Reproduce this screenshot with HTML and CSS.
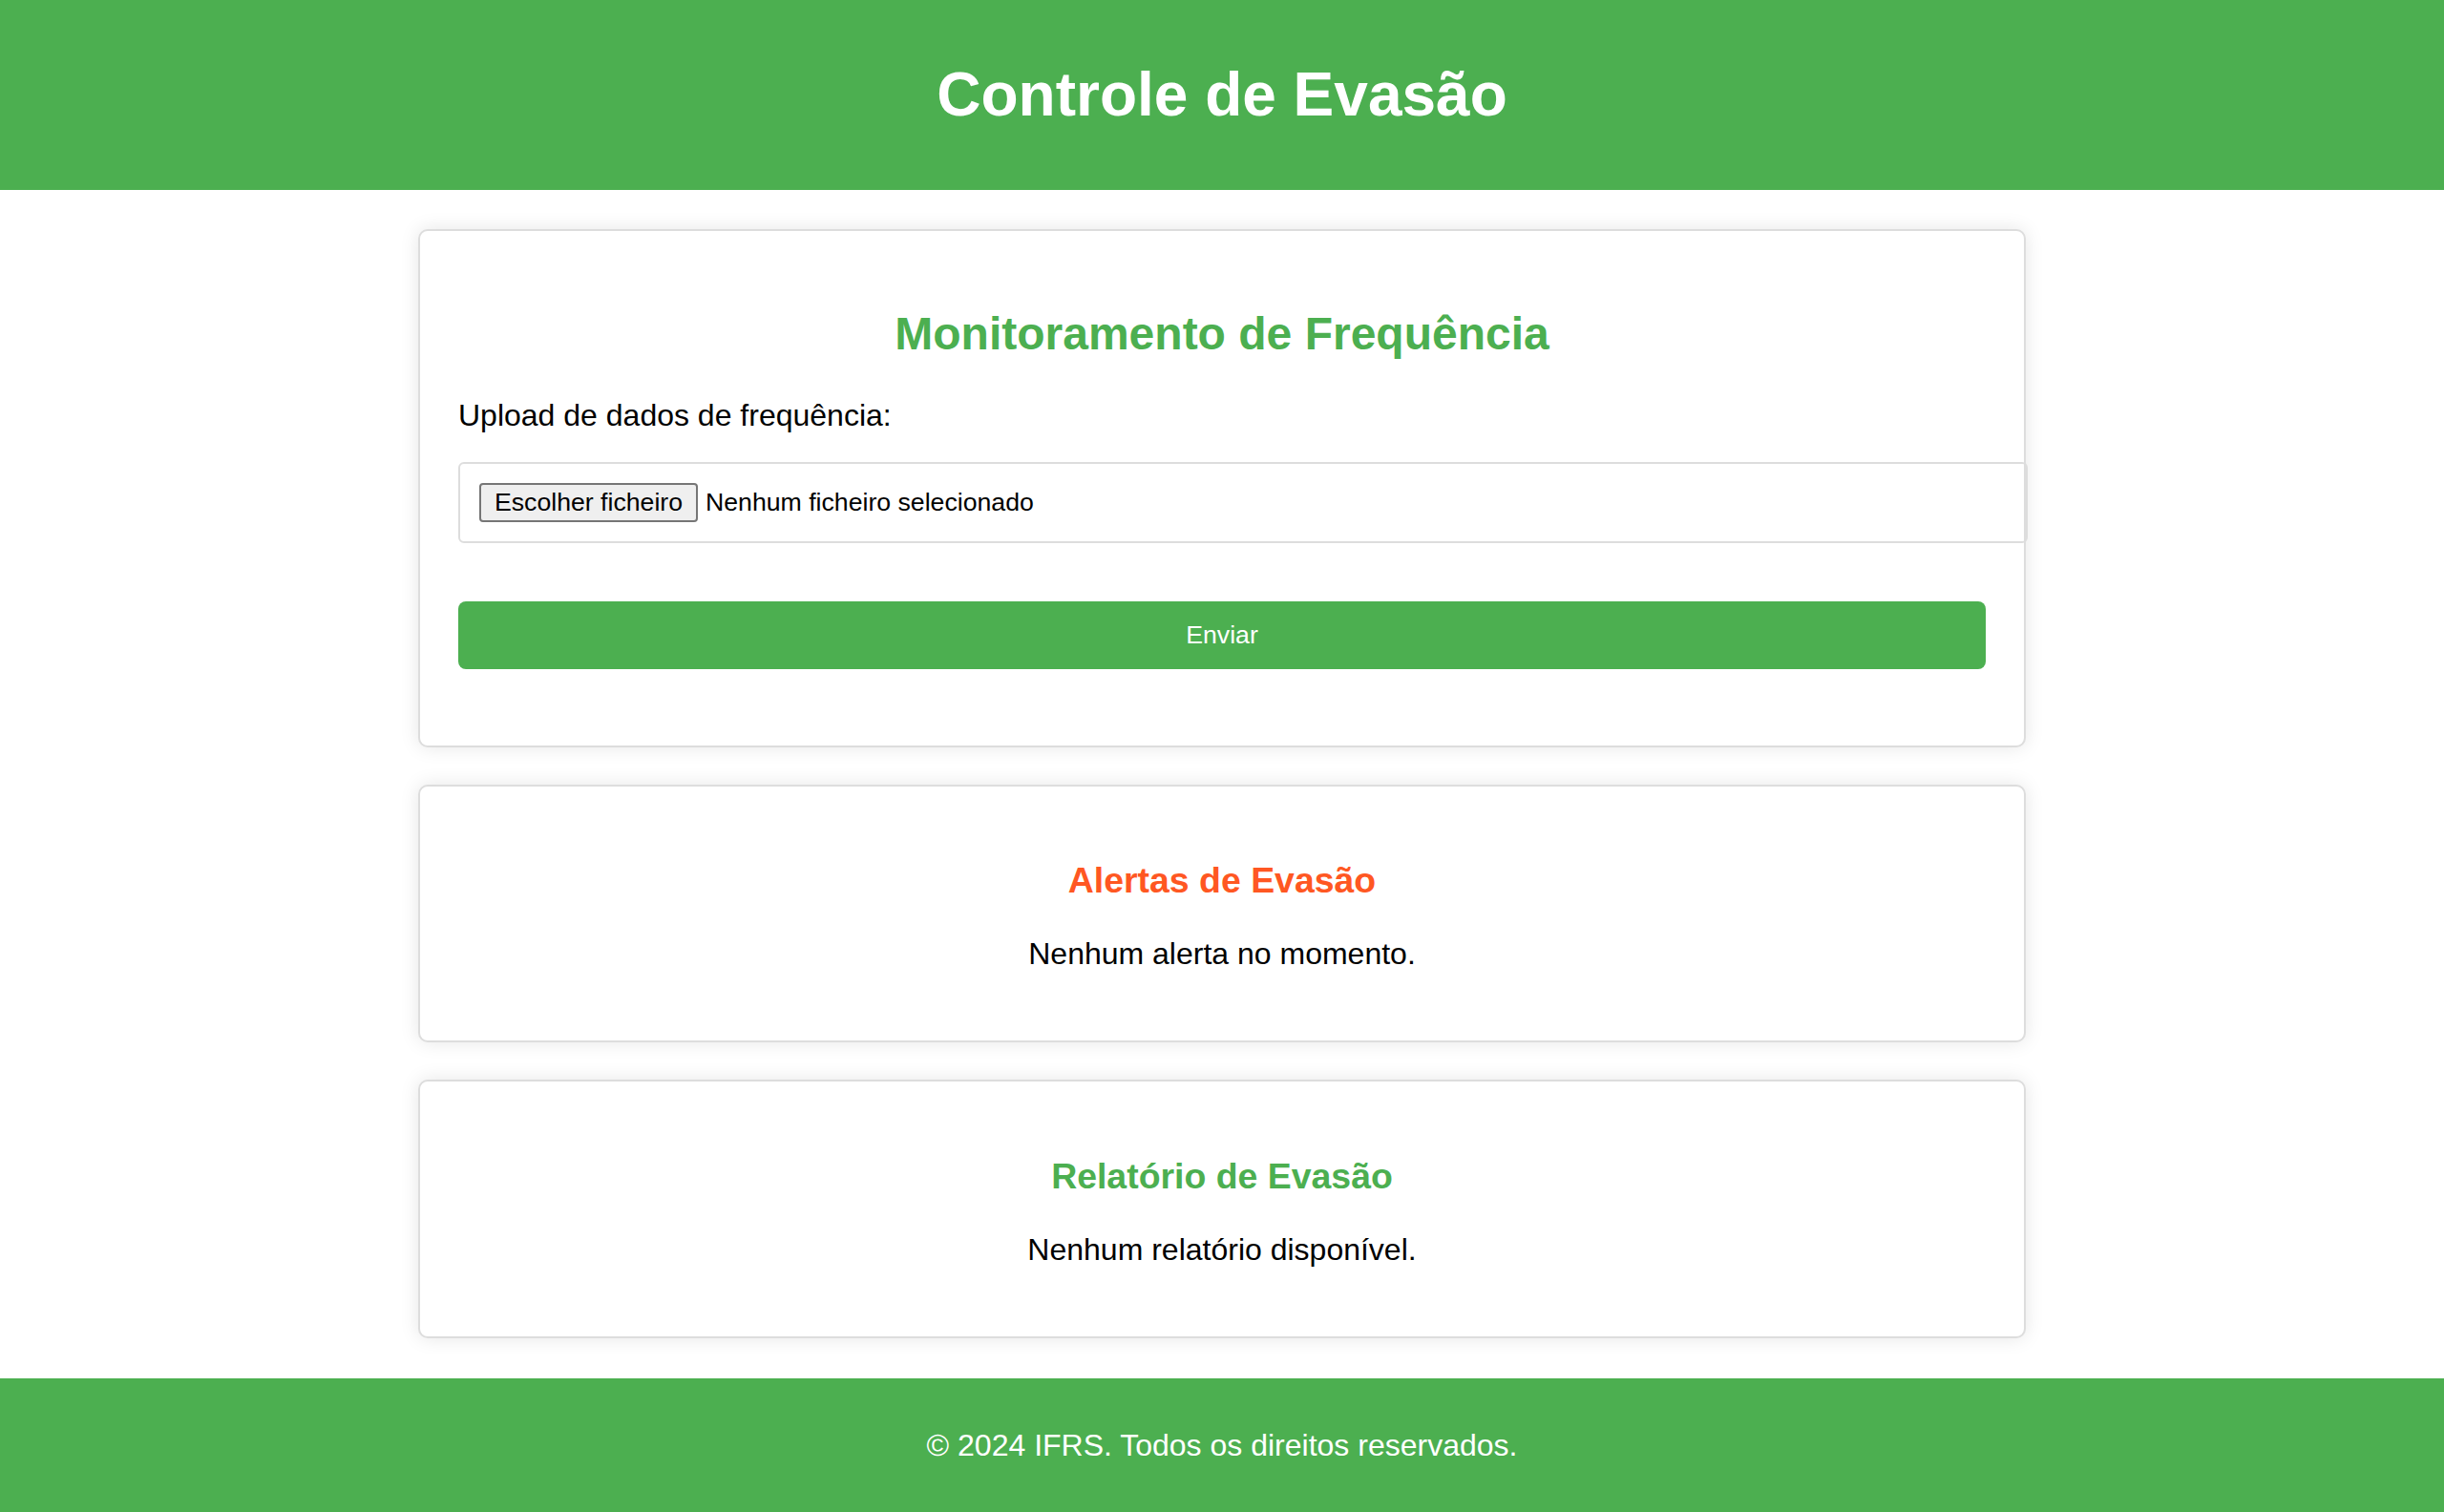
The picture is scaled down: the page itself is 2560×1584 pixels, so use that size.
FILE: index.html
```html
<!DOCTYPE html>
<html lang="pt">
<head>
<meta charset="utf-8">
<title>Controle de Evasão</title>
<link rel="stylesheet" href="styles.css">
</head>
<body>
<header class="site-header">
  <h1 class="site-title">Controle de Evasão</h1>
</header>
<main class="main">
  <section class="card">
    <h2 class="card-title">Monitoramento de Frequência</h2>
    <form class="upload-form">
      <label class="upload-label">Upload de dados de frequência:</label>
      <div class="file-box">
        <span class="file-button">Escolher ficheiro</span>
        <span class="file-name">Nenhum ficheiro selecionado</span>
      </div>
      <button type="button" class="submit-button">Enviar</button>
    </form>
  </section>
  <section class="card">
    <h3 class="section-title alert">Alertas de Evasão</h3>
    <p class="section-text">Nenhum alerta no momento.</p>
  </section>
  <section class="card">
    <h3 class="section-title report">Relatório de Evasão</h3>
    <p class="section-text">Nenhum relatório disponível.</p>
  </section>
</main>
<footer class="site-footer">
  <p class="footer-text">© 2024 IFRS. Todos os direitos reservados.</p>
</footer>
</body>
</html>
```

FILE: styles.css
```css
* { box-sizing: border-box; }

html, body {
  margin: 0;
  padding: 0;
}

body {
  font-family: "Liberation Sans", Arial, sans-serif;
  font-size: 32px;
  color: #000;
  background: #fff;
}

.site-header {
  background: #4caf50;
  color: #fff;
  padding: 20px 0;
  text-align: center;
}

.site-title {
  margin: 42.88px 0;
  font-size: 64px;
  font-weight: bold;
  line-height: 73.6px;
}

.main {
  display: flex;
  flex-direction: column;
  align-items: center;
  gap: 39px;
  padding: 41px 0 42px;
}

.card {
  width: 1684px;
  background: #fff;
  border: 2px solid #ddd;
  border-radius: 10px;
  padding: 40px;
  box-shadow: 0 0 20px rgba(0, 0, 0, 0.1);
  text-align: center;
}

.card-title {
  margin: 39.84px 0;
  font-size: 48px;
  line-height: 55.2px;
  font-weight: bold;
  color: #4caf50;
}

.upload-form {
  display: flex;
  flex-direction: column;
  align-items: flex-start;
  text-align: left;
  margin-bottom: 40px;
}

.upload-label {
  display: block;
  font-size: 32px;
  line-height: 36.8px;
  margin-bottom: 30px;
}

.file-box {
  width: 1644px;
  height: 85px;
  margin-bottom: 61px;
  padding: 20px;
  border: 2px solid #ddd;
  border-radius: 6px;
  display: flex;
  align-items: center;
  font-size: 26.67px;
}

.file-button {
  display: inline-flex;
  align-items: center;
  height: 41px;
  padding: 0 14px;
  margin-right: 8px;
  background: #efefef;
  border: 2px solid #767676;
  border-radius: 4px;
  color: #000;
  line-height: 1;
}

.file-name {
  color: #000;
}

.submit-button {
  width: 1600px;
  height: 70.6px;
  background: #4caf50;
  color: #fff;
  border: none;
  border-radius: 8px;
  font-family: "Liberation Sans", Arial, sans-serif;
  font-size: 26.67px;
  padding: 0;
}

.section-title {
  margin: 37.44px 0;
  font-size: 37.44px;
  line-height: 43px;
  font-weight: bold;
}

.section-title.alert { color: #ff5722; }
.section-title.report { color: #4caf50; }

.section-text {
  margin: 32px 0;
  font-size: 32px;
  line-height: 36.8px;
}

.site-footer {
  background: #4caf50;
  color: #fff;
  text-align: center;
  padding: 20px 0;
}

.footer-text {
  margin: 32px 0;
  font-size: 32px;
  line-height: 36.8px;
}
```
